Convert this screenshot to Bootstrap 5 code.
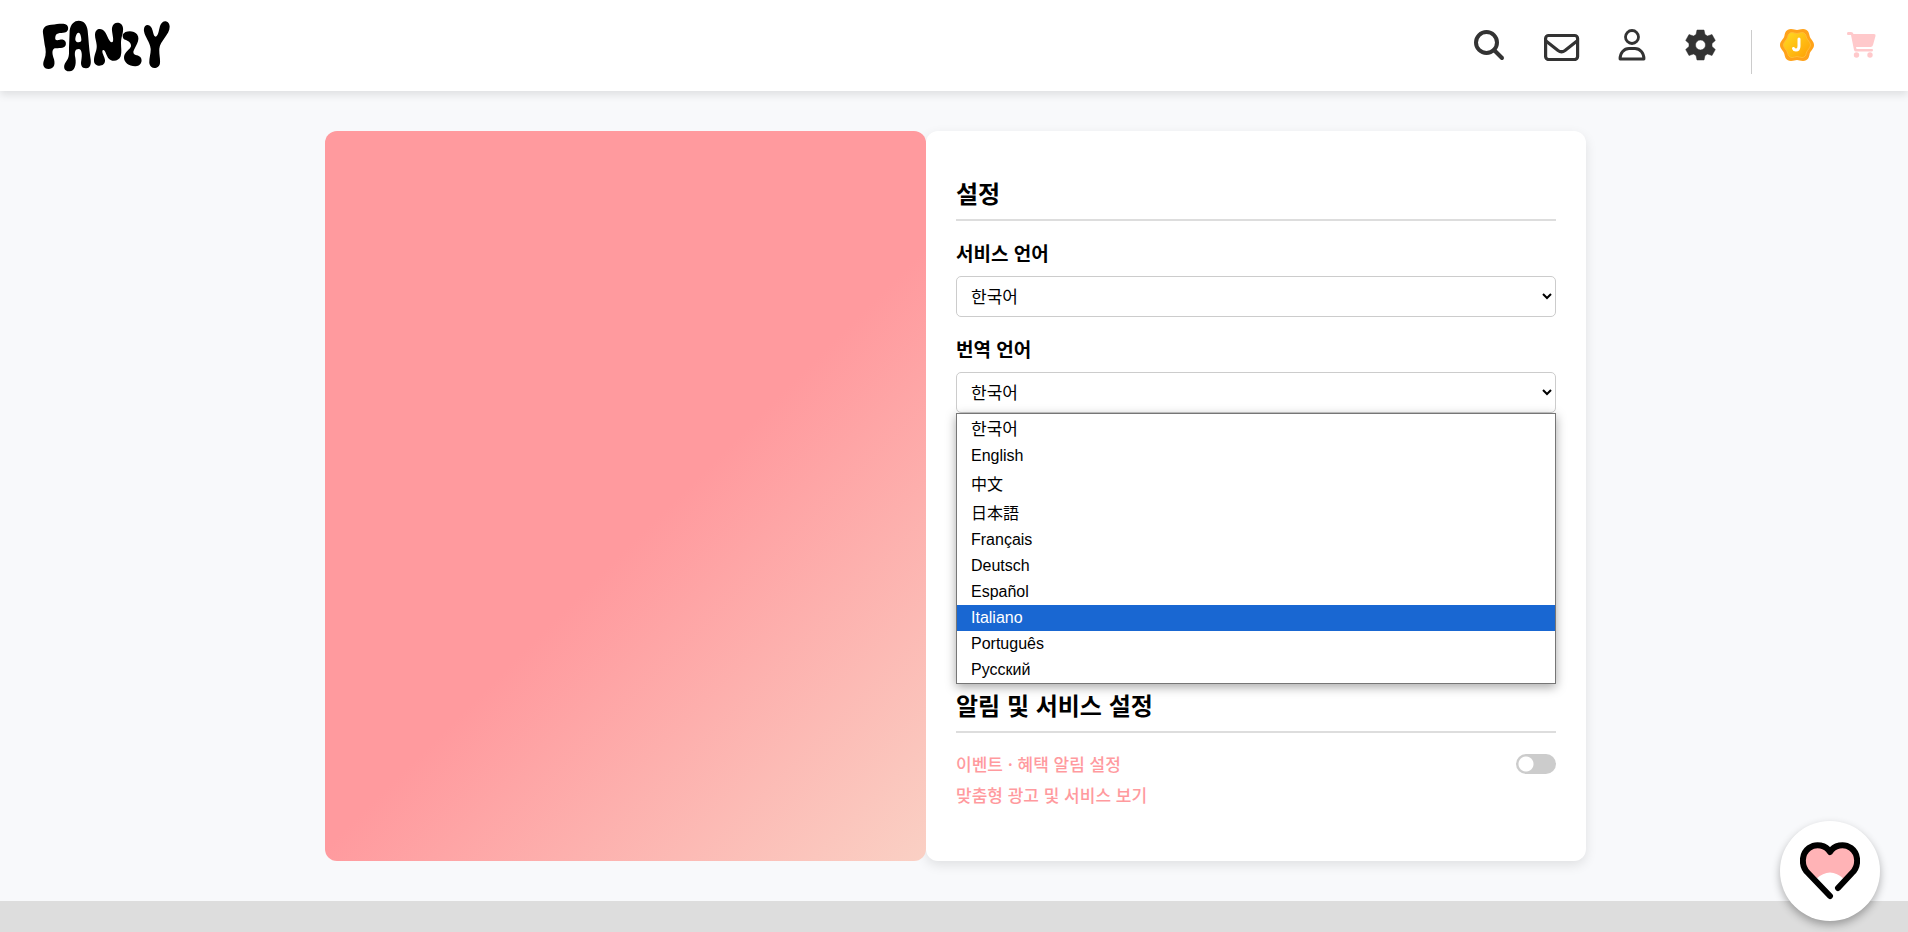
<!DOCTYPE html>
<html lang="ko">
<head>
<meta charset="utf-8">
<meta name="viewport" content="width=device-width, initial-scale=1">
<title>FANZY - 설정</title>
<link rel="stylesheet" href="https://cdn.jsdelivr.net/npm/bootstrap@5.3.0/dist/css/bootstrap.min.css">
<style>
  body { background: #f8f9fb; color: #000; font-family: "Liberation Sans", "Noto Sans CJK KR", sans-serif; }
  .site-header { height: 91px; padding: 0 32px 0 42px; box-shadow: 0 4px 8px rgba(0,0,0,.1); z-index: 2; }
  .header-nav { padding-bottom: 2px; }
  .icon-btn { padding: 0; border: 0; background: none; line-height: 0; color: #333; }
  .header-rule { width: 1px; height: 44px; background: #ccc; margin: 14px 28px 0 35px; }
  .settings-page { padding: 40px 13px 40px 16px; }
  .settings-wrap { display: grid; grid-template-columns: 601fr 660fr; max-width: 1261px; }
  .visual-panel { z-index: 1; border-radius: 12px; background: linear-gradient(135deg, #ff9a9e 0%, #ff9a9e 54%, #fad0c4 100%); }
  .settings-card { border-radius: 12px; padding: 44px 30px 51px; box-shadow: 0 4px 12px rgba(0,0,0,.1); }
  .section-title { font: 700 24px/36px "Noto Sans CJK KR", sans-serif; padding-bottom: 8px; border-bottom: 2px solid #ddd; margin: 0 0 15px; }
  .field-label { display: block; font: 700 19px/28px "Noto Sans CJK KR", sans-serif; margin: 18px 0 9px; }
  .lang-select { width: 100%; height: 41px; padding: 0 10px 2px; border: 1px solid #ccc; border-radius: 5px; background: #fff; color: #000; font: 17px "Noto Sans CJK KR", sans-serif; }
  .language-section { padding-bottom: 274px; }
  .lang-menu { top: 100%; left: 0; right: 0; border: 1px solid #767676; box-shadow: 0 3px 10px rgba(0,0,0,.35); z-index: 3; }
  .lang-option { height: 26px; line-height: 26px; padding: 0 14px; font-size: 16px; }
  .lang-option.is-cjk { height: 29px; font: 16px/29px "Noto Sans CJK SC", sans-serif; }
  .lang-option.is-hangul { height: 29px; font: 17px/28px "Noto Sans CJK KR", sans-serif; }
  .lang-option.is-active { background: #1967d2; color: #fff; }
  .pref-row { height: 31px; font: 500 17px/31px "Noto Sans CJK KR", sans-serif; }
  .pref-row a, .pref-row label { color: #ff9a9e; text-decoration: none; }
  .toggle-input { appearance: none; width: 40px; height: 20px; margin: 0; border-radius: 10px; background: radial-gradient(circle at 10px 10px, #fff 7px, #ccc 8px); }
  .site-footer { min-height: 31px; background: #ddd; }
  .fan-btn { right: 28px; bottom: 11px; width: 100px; height: 100px; background: #fff; box-shadow: 0 4px 8px rgba(0,0,0,.3); z-index: 4; }
</style>
</head>
<body class="d-flex flex-column min-vh-100">
<header class="site-header bg-white position-relative d-flex align-items-center justify-content-between">
  <a href="#" aria-label="FANZY">
    <svg class="d-block" width="130" height="52" viewBox="66 60 390 156">
      <path d="M69 100C67 82 77 75 94 74C110 73 123 70 134 72C146 74 148 90 139 96C127 101 109 95 106 110C104 121 109 122 120 119C134 117 140 126 137 136C132 147 115 144 104 145C94 150 97 164 102 178C107 198 99 207 86 207C70 207 66 194 73 178C79 162 78 150 74 134Z"/>
      <path fill-rule="evenodd" d="M149 91C152 72 163 62 176 62C192 62 201 74 203 92C206 120 207 145 211 172C215 193 211 204 199 205C185 206 181 195 184 181C187 164 186 148 176 147C165 147 163 157 166 173C170 196 163 213 149 214C133 215 127 200 138 185C149 172 147 158 147 143ZM176 98C171 97 166 108 166 119C166 128 184 130 184 120C184 110 181 99 176 98Z"/>
      <path d="M225 105C225 83 246 82 255 96C263 108 268 128 276 127C285 125 274 96 276 84C279 62 307 64 309 84C311 98 303 110 303 130C303 145 306 155 302 169C296 186 272 186 264 173C257 162 255 147 248 151C244 157 253 168 255 180C257 202 222 203 222 182C222 162 232 153 230 135C229 123 225 116 225 105Z"/>
      <path d="M308 104C314 92 341 90 351 103C364 120 343 143 340 155C340 168 352 162 361 171C371 184 360 200 345 199C327 198 311 188 312 171C314 155 331 148 333 139C334 128 325 123 318 120C311 119 307 113 308 104Z"/>
      <path d="M372 94C369 72 388 70 395 84C400 95 400 109 407 110C414 109 416 94 420 78C427 56 449 61 449 80C449 104 420 122 418 146C417 162 421 175 420 189C418 209 390 209 388 190C387 175 393 159 392 146C390 126 375 112 372 94Z"/>
    </svg>
  </a>
  <nav class="header-nav d-flex align-items-center" aria-label="주요 메뉴">
    <button type="button" class="icon-btn me-4" aria-label="검색"><svg width="46" height="32" viewBox="0 0 46 32" fill="none" stroke="#333" stroke-width="4" stroke-linecap="round"><circle cx="12.500" cy="13.500" r="10.500"/><path d="M20 21L28 29"/></svg></button>
    <button type="button" class="icon-btn me-4" aria-label="메시지"><svg width="50" height="32" viewBox="0 0 50 32" fill="none" stroke="#333" stroke-width="3.200"><rect x="1.600" y="6.500" width="32" height="24" rx="3"/><path d="M2 12L14 21.500Q17.500 24 21 21.500L33 12"/></svg></button>
    <button type="button" class="icon-btn me-4" aria-label="내 정보"><svg width="43" height="32" viewBox="0 0 43 32" fill="none" stroke="#333" stroke-width="2.800"><circle cx="14" cy="8" r="6.500"/><path d="M2 30C2 24 6 19.500 11 19.500H17C22 19.500 26 24 26 30Z" stroke-linejoin="round"/></svg></button>
    <button type="button" class="icon-btn" aria-label="설정"><svg width="31" height="32" viewBox="0 0 30 32"><path fill="#333" fill-rule="evenodd" d="M11.500 1H18.500L19.500 5.500L22 7L26.500 5.500L29.800 11.500L26.500 14.500V17.500L29.800 20.500L26.500 26.500L22 25L19.500 26.500L18.500 31H11.500L10.500 26.500L8 25L3.500 26.500L.2 20.500L3.500 17.500V14.500L.2 11.500L3.500 5.500L8 7L10.500 5.500ZM15 11A5 5 0 1 0 15 21A5 5 0 1 0 15 11Z" stroke="#333" stroke-width=".5" stroke-linejoin="round"/></svg></button>
    <span class="header-rule"></span>
    <button type="button" class="icon-btn me-4" aria-label="젤리"><svg width="43" height="34" viewBox="0 0 43 34"><defs><linearGradient id="coinFill" x1="0" y1="0" x2="1" y2="1"><stop offset="0" stop-color="#ffdc22"/><stop offset="1" stop-color="#ff9f05"/></linearGradient></defs><path fill="#ffa21a" d="M11 1C14 1 15 2 17 2S20 1 23 1C28 1 29 5 29.500 7.500C30 11 34 13 34 17S30 23 29.500 26.500C29 29 28 33 23 33C20 33 19 32 17 32S14 33 11 33C6 33 5 29 4.500 26.500C4 23 0 21 0 17S4 11 4.500 7.500C5 5 6 1 11 1Z"/><path fill="url(#coinFill)" stroke="#ffbd35" d="M12 4.500C14 4.500 15 5.500 17 5.500S20 4.500 22 4.500C25 4.500 26 7 26.300 9C27 12 30.500 14 30.500 17S27 22 26.300 25C26 27 25 29.500 22 29.500C20 29.500 19 28.500 17 28.500S14 29.500 12 29.500C9 29.500 8 27 7.700 25C7 22 3.500 20 3.500 17S7 12 7.700 9C8 7 9 4.500 12 4.500Z"/><path fill="none" stroke="#fff" stroke-width="3" stroke-linecap="round" d="M19 11V18Q19 22 16 22Q14 22 13.500 20.500"/></svg></button>
    <button type="button" class="icon-btn" aria-label="장바구니"><svg width="29" height="26" viewBox="0 0 29 26"><path fill="#ffc9cb" d="M1 0H4Q6 0 6.500 2H27Q29 2 28.500 4L26 13Q25.500 15 23.500 15H9L9.500 17H25Q26 17 26 18T25 19.500H9Q7.500 19.500 7 18L4 3H1Q0 3 0 1.500T1 0Z"/><circle cx="9.500" cy="23" r="2.700" fill="#ffc9cb"/><circle cx="23" cy="23" r="2.700" fill="#ffc9cb"/></svg></button>
  </nav>
</header>

<main class="settings-page">
  <div class="settings-wrap mx-auto">
    <div class="visual-panel"></div>
    <div class="settings-card bg-white">
      <section class="language-section">
        <h2 class="section-title">설정</h2>
        <label class="field-label" for="serviceLang">서비스 언어</label>
        <select class="lang-select d-block" id="serviceLang"><option>한국어</option></select>
        <label class="field-label" for="translateLang">번역 언어</label>
        <div class="position-relative">
          <select class="lang-select d-block" id="translateLang"><option>한국어</option></select>
          <ul class="lang-menu position-absolute bg-white list-unstyled m-0" role="listbox" aria-label="번역 언어">
            <li class="lang-option is-hangul" role="option">한국어</li>
            <li class="lang-option" role="option">English</li>
            <li class="lang-option is-cjk" role="option">中文</li>
            <li class="lang-option is-cjk" role="option">日本語</li>
            <li class="lang-option" role="option">Français</li>
            <li class="lang-option" role="option">Deutsch</li>
            <li class="lang-option" role="option">Español</li>
            <li class="lang-option is-active" role="option" aria-selected="true">Italiano</li>
            <li class="lang-option" role="option">Português</li>
            <li class="lang-option" role="option">Русский</li>
          </ul>
        </div>
      </section>
      <section>
        <h2 class="section-title">알림 및 서비스 설정</h2>
        <div class="pref-row d-flex align-items-center justify-content-between">
          <label for="eventAlert">이벤트 · 혜택 알림 설정</label>
          <input class="toggle-input" type="checkbox" role="switch" id="eventAlert">
        </div>
        <div class="pref-row"><a href="#">맞춤형 광고 및 서비스 보기</a></div>
      </section>
    </div>
  </div>
</main>
<footer class="site-footer flex-grow-1"></footer>

<button type="button" class="fan-btn position-fixed rounded-circle border-0 p-0 d-flex align-items-center justify-content-center" aria-label="팬 메뉴">
  <svg width="60" height="58" viewBox="0 0 60 58"><path fill="#ffb3b6" d="M8 31C2 24 3 10 12 5C20 2 27 6 30 12C34 6 40 2 48 5C57 10 58 24 52 31L44 37Q30 24 16 37Z"/><path fill="none" stroke="#000" stroke-width="6" stroke-linecap="round" stroke-linejoin="round" d="M30 54L8 31C1 24 1 12 9 6C16 1 26 3 30 10C34 3 44 1 51 6C59 12 59 24 52 31L38 46"/></svg>
</button>
<script src="https://cdn.jsdelivr.net/npm/bootstrap@5.3.0/dist/js/bootstrap.bundle.min.js"></script>
</body>
</html>
